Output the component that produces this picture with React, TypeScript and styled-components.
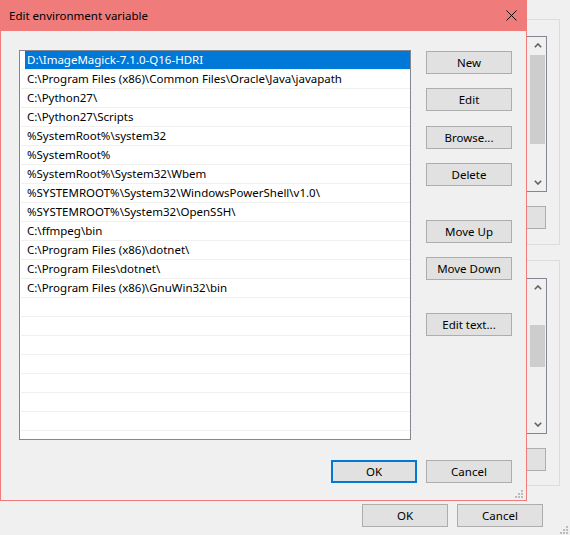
import React from "react";
import styled, { createGlobalStyle } from "styled-components";

const GlobalStyle = createGlobalStyle`
  html, body {
    margin: 0;
    padding: 0;
    background: #f0f0f0;
  }
  body {
    font-family: "Noto Sans", "Open Sans", sans-serif;
    font-size: 11.5px;
    color: #000;
  }
  * {
    box-sizing: border-box;
  }
`;

const paths = [
  "D:\\ImageMagick-7.1.0-Q16-HDRI",
  "C:\\Program Files (x86)\\Common Files\\Oracle\\Java\\javapath",
  "C:\\Python27\\",
  "C:\\Python27\\Scripts",
  "%SystemRoot%\\system32",
  "%SystemRoot%",
  "%SystemRoot%\\System32\\Wbem",
  "%SYSTEMROOT%\\System32\\WindowsPowerShell\\v1.0\\",
  "%SYSTEMROOT%\\System32\\OpenSSH\\",
  "C:\\ffmpeg\\bin",
  "C:\\Program Files (x86)\\dotnet\\",
  "C:\\Program Files\\dotnet\\",
  "C:\\Program Files (x86)\\GnuWin32\\bin",
];

const ROW_COUNT = 21;

const Desktop = styled.div`
  position: relative;
  width: 570px;
  height: 535px;
  overflow: hidden;
  background: #f0f0f0;
`;

/* ---------- window behind the dialog ---------- */

const BackWindow = styled.div`
  display: flex;
  flex-direction: column;
  align-items: flex-end;
  height: 100%;
  padding: 19px 10px 0 0;
`;

const GroupBox = styled.div<{ $top: number; $bottom: number }>`
  width: 420px;
  border: 1px solid #dcdcdc;
  display: flex;
  flex-direction: column;
  align-items: flex-end;
  padding: ${(p) => p.$top}px 12px ${(p) => p.$bottom}px 0;

  & + & {
    margin-top: 15px;
  }
`;

const BackList = styled.div`
  width: 320px;
  height: 156px;
  border: 1px solid #828790;
  background: #f0f0f0;
  display: flex;
  justify-content: flex-end;
`;

const ScrollBar = styled.div`
  width: 17px;
  display: flex;
  flex-direction: column;
  background: #f0f0f0;
`;

const ScrollArrow = styled.div`
  height: 17px;
  display: flex;
  align-items: center;
  justify-content: center;
`;

const ScrollTrack = styled.div`
  flex: 1;
  position: relative;
`;

const ScrollThumb = styled.div<{ $offset: number; $size: number }>`
  position: absolute;
  left: 1px;
  right: 1px;
  top: ${(p) => p.$offset}px;
  height: ${(p) => p.$size}px;
  background: #cdcdcd;
`;

const BackFooter = styled.div`
  display: flex;
  gap: 9px;
  margin: 18px 17px 0 0;
`;

const Button = styled.button<{ $default?: boolean; $mt?: number }>`
  width: 86px;
  height: 23px;
  margin: ${(p) => p.$mt ?? 0}px 0 0 0;
  padding: 0;
  background: #e1e1e1;
  border: ${(p) => (p.$default ? "2px solid #0078d7" : "1px solid #adadad")};
  font-family: inherit;
  font-size: 11.5px;
  color: #000;
  line-height: 1;
  flex-shrink: 0;
`;

const BackButton = styled(Button)`
  margin-top: 14px;
  margin-right: 1px;
`;

const Grip = styled.svg<{ $right: number; $bottom: number }>`
  position: absolute;
  right: ${(p) => p.$right}px;
  bottom: ${(p) => p.$bottom}px;
`;

/* ---------- the dialog ---------- */

const Dialog = styled.div`
  position: absolute;
  top: 0;
  left: 0;
  width: 527px;
  height: 501px;
  border: 1px solid #f07b7b;
  background: #f0f0f0;
  display: flex;
  flex-direction: column;
`;

const TitleBar = styled.div`
  height: 30px;
  flex-shrink: 0;
  background: #f07b7b;
  display: flex;
  align-items: center;
  justify-content: space-between;
  padding: 0 9px 1px 8px;
`;

const Title = styled.span`
  font-size: 11.5px;
`;

const Body = styled.div`
  flex: 1;
  display: flex;
  flex-direction: column;
  padding: 19px 14px 17px 18px;
`;

const MainRow = styled.div`
  display: flex;
  gap: 15px;
`;

const ListBox = styled.div`
  width: 392px;
  height: 390px;
  border: 1px solid #828790;
  background: #fff;
  overflow: hidden;
`;

const Row = styled.div`
  height: 19px;
  border-bottom: 1px solid #f0f0f0;
  margin-left: 1px;
  display: flex;
`;

const RowLabel = styled.div<{ $selected?: boolean }>`
  flex: 1;
  margin-left: 4px;
  padding-left: 2px;
  line-height: 18px;
  white-space: nowrap;
  background: ${(p) => (p.$selected ? "#0078d7" : "transparent")};
  color: ${(p) => (p.$selected ? "#fff" : "#000")};
`;

const ButtonColumn = styled.div`
  display: flex;
  flex-direction: column;
  gap: 14px;
  padding-top: 1px;
`;

const Footer = styled.div`
  display: flex;
  justify-content: flex-end;
  gap: 9px;
  margin-top: 20px;
`;

const Chevron = ({ down }: { down?: boolean }) => (
  <svg width="8" height="5" viewBox="0 0 8 5">
    <polyline
      points={down ? "0.8,0.8 4,4 7.2,0.8" : "0.8,4.2 4,1 7.2,4.2"}
      fill="none"
      stroke="#606060"
      strokeWidth="1.6"
    />
  </svg>
);

const CloseIcon = () => (
  <svg width="11" height="11" viewBox="0 0 11 11">
    <path d="M0.5 0.5 L10.5 10.5 M10.5 0.5 L0.5 10.5" stroke="#000" strokeWidth="1" />
  </svg>
);

const GripDots = ({ color }: { color: string }) => (
  <>
    {[
      [6, 0],
      [3, 3],
      [6, 3],
      [0, 6],
      [3, 6],
      [6, 6],
    ].map(([x, y]) => (
      <rect key={`${x}-${y}`} x={x} y={y} width="2" height="2" fill={color} />
    ))}
  </>
);

const BackListWithScroll = ({ offset, size }: { offset: number; size: number }) => (
  <BackList>
    <ScrollBar>
      <ScrollArrow>
        <Chevron />
      </ScrollArrow>
      <ScrollTrack>
        <ScrollThumb $offset={offset} $size={size} />
      </ScrollTrack>
      <ScrollArrow>
        <Chevron down />
      </ScrollArrow>
    </ScrollBar>
  </BackList>
);

export default function App() {
  const rows = Array.from({ length: ROW_COUNT }, (_, i) => paths[i] ?? "");

  return (
    <>
      <GlobalStyle />
      <Desktop>
        <BackWindow>
          <GroupBox $top={16} $bottom={15}>
            <BackListWithScroll offset={1} size={89} />
            <BackButton>New...</BackButton>
          </GroupBox>
          <GroupBox $top={17} $bottom={14}>
            <BackListWithScroll offset={29} size={42} />
            <BackButton>New...</BackButton>
          </GroupBox>
          <BackFooter>
            <Button>OK</Button>
            <Button>Cancel</Button>
          </BackFooter>
        </BackWindow>
        <Grip $right={2} $bottom={1} width="8" height="8" viewBox="0 0 8 8">
          <GripDots color="#bcbcbc" />
        </Grip>

        <Dialog>
          <TitleBar>
            <Title>Edit environment variable</Title>
            <CloseIcon />
          </TitleBar>
          <Body>
            <MainRow>
              <ListBox>
                {rows.map((text, i) => (
                  <Row key={i}>
                    <RowLabel $selected={i === 0}>{text}</RowLabel>
                  </Row>
                ))}
              </ListBox>
              <ButtonColumn>
                <Button>New</Button>
                <Button>Edit</Button>
                <Button $mt={1}>Browse...</Button>
                <Button>Delete</Button>
                <Button $mt={20}>Move Up</Button>
                <Button>Move Down</Button>
                <Button $mt={19}>Edit text...</Button>
              </ButtonColumn>
            </MainRow>
            <Footer>
              <Button $default>OK</Button>
              <Button>Cancel</Button>
            </Footer>
          </Body>
          <Grip $right={3} $bottom={2} width="8" height="8" viewBox="0 0 8 8">
            <GripDots color="#bcbcbc" />
          </Grip>
        </Dialog>
      </Desktop>
    </>
  );
}
